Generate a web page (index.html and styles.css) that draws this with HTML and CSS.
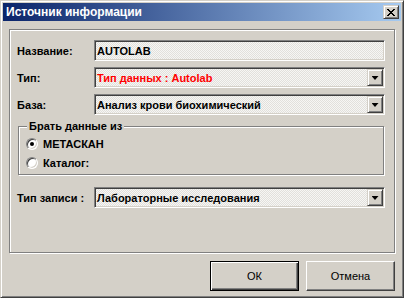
FILE: index.html
```html
<!DOCTYPE html>
<html lang="ru">
<head>
<meta charset="utf-8">
<title>Источник информации</title>
<link rel="stylesheet" href="styles.css">
</head>
<body>
<div class="window">
  <div class="titlebar">
    <span class="title">Источник информации</span>
    <span class="close"><svg width="8" height="7" viewBox="0 0 8 7" shape-rendering="crispEdges" fill="#000"><rect x="0" y="0" width="2" height="1"/><rect x="6" y="0" width="2" height="1"/><rect x="1" y="1" width="2" height="1"/><rect x="5" y="1" width="2" height="1"/><rect x="2" y="2" width="4" height="1"/><rect x="3" y="3" width="2" height="1"/><rect x="2" y="4" width="4" height="1"/><rect x="1" y="5" width="2" height="1"/><rect x="5" y="5" width="2" height="1"/><rect x="0" y="6" width="2" height="1"/><rect x="6" y="6" width="2" height="1"/></svg></span>
  </div>
  <div class="body">
    <div class="panel">
      <div class="row">
        <span class="label">Название:</span>
        <div class="field"><span class="text">AUTOLAB</span></div>
      </div>
      <div class="row">
        <span class="label">Тип:</span>
        <div class="field"><span class="text red">Тип данных : Autolab</span><span class="drop"></span></div>
      </div>
      <div class="row">
        <span class="label">База:</span>
        <div class="field"><span class="text">Анализ крови биохимический</span><span class="drop"></span></div>
      </div>
      <div class="group">
        <span class="legend">Брать данные из</span>
        <div class="radio-row"><span class="radio checked"></span><span class="rtext">МЕТАСКАН</span></div>
        <div class="radio-row"><span class="radio"></span><span class="rtext">Каталог:</span></div>
      </div>
      <div class="row record">
        <span class="label">Тип записи :</span>
        <div class="field"><span class="text">Лабораторные исследования</span><span class="drop"></span></div>
      </div>
    </div>
    <div class="buttons">
      <button class="btn default">ОК</button>
      <button class="btn">Отмена</button>
    </div>
  </div>
</div>
</body>
</html>
```
FILE: styles.css
```css
html, body {
  margin: 0;
  padding: 0;
  background: #d4d0c8;
}
.window {
  width: 404px;
  height: 298px;
  box-sizing: border-box;
  border: 1px solid;
  border-color: #d4d0c8 #404040 #404040 #d4d0c8;
  box-shadow: inset 1px 1px #fff, inset -1px -1px #808080;
  padding: 2px;
  background: #d4d0c8;
  font-family: "Liberation Sans", Arial, sans-serif;
  font-size: 11px;
  color: #000;
}
.titlebar {
  height: 18px;
  display: flex;
  align-items: center;
  justify-content: space-between;
  padding: 0 2px 0 2px;
  background: linear-gradient(to right, #0a246a, #a6caf0);
}
.title {
  color: #fff;
  font-weight: bold;
  font-size: 12px;
  line-height: 18px;
  padding-left: 1px;
}
.close {
  width: 16px;
  height: 14px;
  box-sizing: border-box;
  border: 1px solid;
  border-color: #d4d0c8 #404040 #404040 #d4d0c8;
  box-shadow: inset 1px 1px #fff, inset -1px -1px #808080;
  background: #d4d0c8;
  display: flex;
  align-items: center;
  justify-content: center;
}
.close svg { display: block; }
.body {
  padding: 8px 6px 0 6px;
}
.panel {
  height: 224px;
  box-sizing: border-box;
  border: 1px solid #808080;
  box-shadow: inset 1px 1px #fff, 1px 1px #fff;
  padding: 10px 8px 0 7px;
  display: flex;
  flex-direction: column;
}
.row {
  display: flex;
  align-items: center;
  height: 21px;
}
.row + .row { margin-top: 6px; }
.label {
  width: 77px;
  font-weight: bold;
  white-space: nowrap;
}
.field {
  width: 291px;
  height: 21px;
  box-sizing: border-box;
  border: 1px solid;
  border-color: #808080 #fff #fff #808080;
  box-shadow: inset 1px 1px #404040, inset -1px -1px #d4d0c8;
  background-color: #ebeae6;
  background-image: conic-gradient(#f6f6f4 25%, #e2e0dc 0 50%, #f6f6f4 0 75%, #e2e0dc 0);
  background-size: 2px 2px;
  display: flex;
  align-items: center;
  padding: 0 1px 0 2px;
}
.text {
  font-weight: bold;
  white-space: nowrap;
  flex: 1;
}
.red { color: #ff0000; }
.drop {
  width: 16px;
  height: 17px;
  box-sizing: border-box;
  border: 1px solid;
  border-color: #d4d0c8 #404040 #404040 #d4d0c8;
  box-shadow: inset 1px 1px #fff, inset -1px -1px #808080;
  background: #d4d0c8;
  display: flex;
  align-items: center;
  justify-content: center;
}
.drop::after {
  content: "";
  width: 7px;
  height: 4px;
  background: #000;
  clip-path: polygon(0 0, 100% 0, 50% 100%);
  margin-top: 1px;
}
.group {
  position: relative;
  margin: 11px 0 0 1px;
  width: 366px;
  height: 49px;
  box-sizing: border-box;
  border: 1px solid #808080;
  box-shadow: inset 1px 1px #fff, 1px 1px #fff;
  padding: 7px 0 0 7px;
}
.legend {
  position: absolute;
  top: -7px;
  left: 8px;
  padding: 0 2px;
  line-height: 13px;
  background: #d4d0c8;
  font-weight: bold;
}
.radio-row {
  display: flex;
  align-items: center;
  height: 19px;
  gap: 5px;
}
.radio {
  width: 12px;
  height: 12px;
  box-sizing: border-box;
  border-radius: 50%;
  border: 1px solid;
  border-color: #808080 #fff #fff #808080;
  box-shadow: inset 1px 1px #404040, inset -1px -1px #d4d0c8;
  background: #fff;
  display: flex;
  align-items: center;
  justify-content: center;
}
.radio.checked::after {
  content: "";
  width: 4px;
  height: 4px;
  border-radius: 50%;
  background: #000;
}
.rtext { font-weight: bold; }
.row.record { margin-top: 12px; }
.buttons {
  display: flex;
  justify-content: flex-end;
  gap: 7px;
  margin-top: 8px;
}
.btn {
  width: 89px;
  height: 30px;
  box-sizing: border-box;
  margin: 0;
  padding: 0;
  border: 1px solid;
  border-color: #fff #404040 #404040 #fff;
  box-shadow: inset -1px -1px #808080;
  background: #d4d0c8;
  font-family: "Liberation Sans", Arial, sans-serif;
  font-size: 11px;
  color: #000;
}
.btn.default {
  border-color: #000;
  box-shadow: inset 1px 1px #fff, inset -1px -1px #404040, inset -2px -2px #808080;
}
```
